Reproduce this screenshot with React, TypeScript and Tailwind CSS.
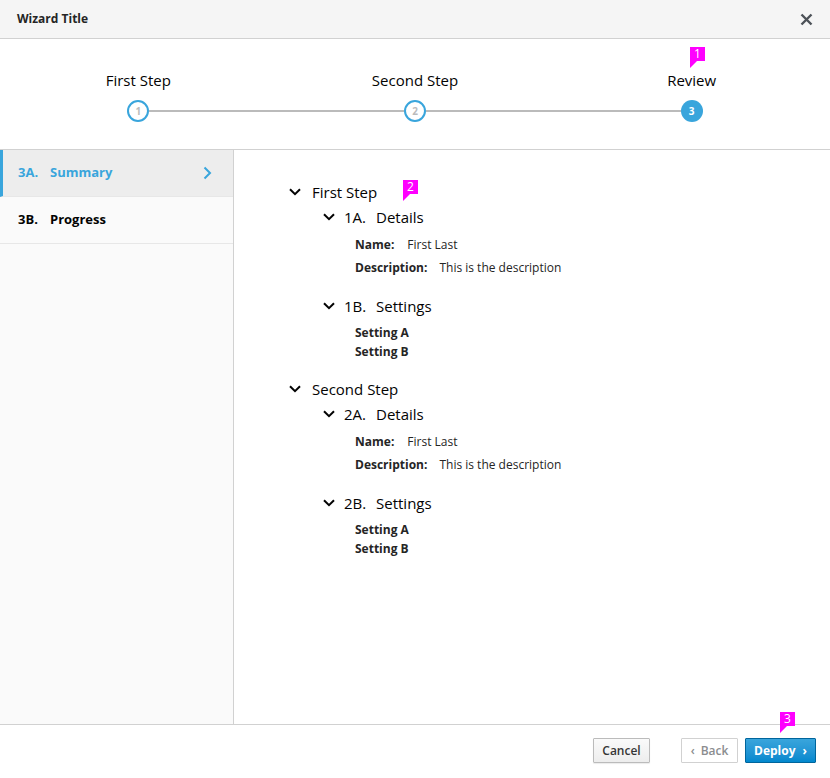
import type { ReactNode } from "react";

const steps = [
	{ n: 1, label: "First Step" },
	{ n: 2, label: "Second Step" },
	{ n: 3, label: "Review" },
];

const review = [
	{
		title: "First Step",
		prefix: "1",
	},
	{
		title: "Second Step",
		prefix: "2",
	},
];

function Chevron({ className }: { className?: string }) {
	return (
		<svg width="12" height="8" viewBox="0 0 12 8" className={className}>
			<path d="M1 1.2 L6 6.2 L11 1.2" fill="none" stroke="currentColor" strokeWidth="2" />
		</svg>
	);
}

function Badge({ n, className }: { n: number; className: string }) {
	return (
		<div className={`absolute ${className}`}>
			<svg width="15" height="21" viewBox="0 0 15 21" className="absolute left-0 top-0">
				<path d="M0 0 H15 V14 H7 L0 21 Z" fill="#ff00ff" />
			</svg>
			<span className="relative flex h-[14px] w-[15px] items-center justify-center text-[12px] leading-none text-white">
				{n}
			</span>
		</div>
	);
}

function Row({ children, className = "" }: { children: ReactNode; className?: string }) {
	return <div className={`flex items-center ${className}`}>{children}</div>;
}

function App() {
	return (
		<div
			className="relative flex h-screen w-full flex-col bg-white text-[#252525]"
			style={{ fontFamily: '"Open Sans", "Liberation Sans", sans-serif' }}
		>
			{/* header */}
			<header className="flex h-[39px] shrink-0 items-center justify-between border-b border-[#d1d1d1] bg-[#f5f5f5] pl-[17px] pr-[17px]">
				<h1 className="text-[12px] font-bold text-[#252525]">Wizard Title</h1>
				<svg width="13" height="13" viewBox="0 0 13 13" className="text-[#4d5258]">
					<path d="M1.5 1.5 L11.5 11.5 M11.5 1.5 L1.5 11.5" stroke="currentColor" strokeWidth="2.4" />
				</svg>
			</header>

			{/* steps */}
			<div className="grid h-[111px] shrink-0 grid-cols-3 border-b border-[#d1d1d1] pt-[30px]">
				{steps.map((s, i) => (
					<div key={s.n} className="flex flex-col items-center">
						<div className="text-[15px] leading-[22px] text-[#030303]">{s.label}</div>
						<div className="mt-[9px] flex w-full items-center">
							<div className={`h-[2px] flex-1 ${i === 0 ? "" : "bg-[#bbbbbb]"}`} />
							{s.n === 3 ? (
								<div className="flex h-[22px] w-[22px] items-center justify-center rounded-full bg-[#39a5dc] text-[10px] font-bold text-white">
									{s.n}
								</div>
							) : (
								<div className="flex h-[22px] w-[22px] items-center justify-center rounded-full border-2 border-[#39a5dc] bg-white text-[10px] font-bold text-[#bbbbbb]">
									{s.n}
								</div>
							)}
							<div className={`h-[2px] flex-1 ${i === 2 ? "" : "bg-[#bbbbbb]"}`} />
						</div>
					</div>
				))}
			</div>

			{/* body */}
			<div className="flex min-h-0 flex-1">
				<nav className="w-[234px] shrink-0 border-r border-[#d1d1d1] bg-[#fafafa]">
					<div className="flex h-[47px] items-center border-b border-[#e7e7e7] border-l-[3px] border-l-[#39a5dc] bg-[#ededed] pl-[15px] pr-[21px] text-[13px] font-bold text-[#39a5dc]">
						<span className="w-[32px]">3A.</span>
						<span className="flex-1">Summary</span>
						<svg width="9" height="14" viewBox="0 0 9 14">
							<path d="M1.5 1.5 L7 7 L1.5 12.5" fill="none" stroke="#39a5dc" strokeWidth="2" />
						</svg>
					</div>
					<div className="flex h-[47px] items-center border-b border-[#e7e7e7] pl-[18px] text-[13px] font-bold text-[#030303]">
						<span className="w-[32px]">3B.</span>
						<span>Progress</span>
					</div>
				</nav>

				<main className="flex-1 pl-[55px] pt-[32px]">
					{review.map((step, idx) => (
						<section key={step.title} className={idx > 0 ? "mt-[18px]" : ""}>
							<Row className="text-[15px] leading-[20px] text-[#030303]">
								<Chevron className="mr-[11px]" />
								<span>{step.title}</span>
							</Row>
							<div className="pl-[34px]">
								<Row className="mt-[5px] text-[15px] leading-[20px] text-[#030303]">
									<Chevron className="mr-[9px]" />
									<span className="w-[32px]">{step.prefix}A.</span>
									<span>Details</span>
								</Row>
								<div className="pl-[32px] text-[12px] leading-[18px]">
									<div className="mt-[9px] flex">
										<span className="mr-[13px] font-bold">Name:</span>
										<span>First Last</span>
									</div>
									<div className="mt-[5px] flex">
										<span className="mr-[12px] font-bold">Description:</span>
										<span>This is the description</span>
									</div>
								</div>
								<Row className="mt-[19px] text-[15px] leading-[20px] text-[#030303]">
									<Chevron className="mr-[9px]" />
									<span className="w-[32px]">{step.prefix}B.</span>
									<span>Settings</span>
								</Row>
								<div className="mt-[7px] pl-[32px] text-[12px] font-bold leading-[19px]">
									<div>Setting A</div>
									<div>Setting B</div>
								</div>
							</div>
						</section>
					))}
				</main>
			</div>

			{/* footer */}
			<footer className="flex h-[54px] shrink-0 items-start justify-end border-t border-[#d1d1d1] bg-white pr-[14px] pt-[13px]">
				<button className="h-[25px] w-[57px] rounded-[1px] border border-[#bbbbbb] bg-gradient-to-b from-[#fafafa] to-[#ededed] text-[12px] font-semibold text-[#363636] shadow-[0_1px_1px_rgba(3,3,3,0.08)]">
					Cancel
				</button>
				<button className="ml-[31px] flex h-[25px] w-[57px] items-center justify-center gap-[6px] rounded-[1px] border border-[#d1d1d1] bg-white text-[12px] font-semibold text-[#8b8d8f]">
					<span className="text-[12px]">‹</span>
					<span>Back</span>
				</button>
				<button className="ml-[7px] flex h-[25px] w-[71px] items-center justify-center gap-[7px] rounded-[1px] border border-[#00659c] bg-gradient-to-b from-[#39a5dc] to-[#0088ce] text-[12px] font-bold text-white">
					<span>Deploy</span>
					<span className="text-[12px]">›</span>
				</button>
			</footer>

			<Badge n={1} className="left-[690px] top-[47px]" />
			<Badge n={2} className="left-[403px] top-[180px]" />
			<Badge n={3} className="left-[780px] top-[712px]" />
		</div>
	);
}

export default App;
